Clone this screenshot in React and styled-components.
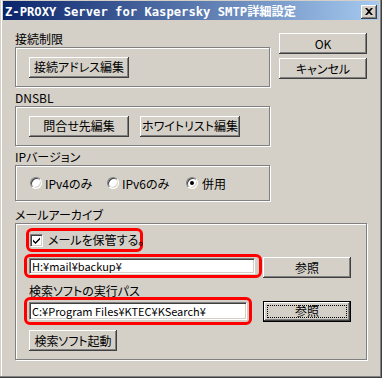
import React from 'react';
import styled, { createGlobalStyle, css } from 'styled-components';

const uiFont = `"Noto Sans CJK JP", "Noto Sans", sans-serif`;

const GlobalStyle = createGlobalStyle`
    html, body {
        margin: 0;
        padding: 0;
        background: #d4d0c8;
    }
    * {
        box-sizing: border-box;
    }
`;

const raised = css`
    box-shadow: inset -1px -1px #404040, inset 1px 1px #ffffff,
        inset -2px -2px #808080, inset 2px 2px #d4d0c8;
`;

const Window = styled.div`
    width: 382px;
    height: 378px;
    padding: 1px 3px 3px 3px;
    background: #d4d0c8;
    display: flex;
    flex-direction: column;
    font-family: ${uiFont};
    font-size: 12px;
    font-feature-settings: 'palt';
    color: #000;
    box-shadow: inset -1px -1px #404040, inset -2px -2px #808080,
        inset 1px 0 #d4d0c8, inset 2px 0 #ffffff;
`;

const TitleBar = styled.div`
    height: 19px;
    flex-shrink: 0;
    display: flex;
    align-items: center;
    justify-content: space-between;
    padding: 0 2px 0 2px;
    background: linear-gradient(to right, #0a246a, #a6caf0);
`;

const TitleText = styled.div`
    font-family: "DejaVu Sans Mono", "Noto Sans CJK JP", monospace;
    font-weight: bold;
    font-size: 12.2px;
    font-feature-settings: normal;
    color: #fff;
    white-space: nowrap;
`;

const CloseButton = styled.div`
    width: 16px;
    height: 14px;
    margin-top: 2px;
    background: #d4d0c8;
    display: flex;
    align-items: center;
    justify-content: center;
    ${raised}
`;

const Body = styled.div`
    flex: 1;
    padding: 9px 12px 0 12px;
    display: flex;
    flex-direction: column;
`;

const TopRow = styled.div`
    display: flex;
    align-items: flex-start;
`;

const LeftColumn = styled.div`
    width: 256px;
    display: flex;
    flex-direction: column;
    gap: 1px;
`;

const SideColumn = styled.div`
    margin-left: 9px;
    padding-top: 4px;
    display: flex;
    flex-direction: column;
    gap: 4px;
`;

const GroupLabel = styled.div`
    height: 18px;
    padding: 3px 0 0 0;
    line-height: 14px;
    white-space: nowrap;
`;

const Frame = styled.div`
    height: ${(p) => p.$height}px;
    border: 1px solid #808080;
    box-shadow: inset 1px 1px #ffffff, 1px 1px #ffffff;
    display: flex;
    align-items: center;
    padding-left: ${(p) => p.$pl || 13}px;
`;

const ButtonRow = styled.div`
    display: flex;
    gap: 11px;
`;

const Button = styled.div`
    position: relative;
    width: ${(p) => p.$w}px;
    height: 21px;
    flex-shrink: 0;
    background: #d4d0c8;
    display: flex;
    align-items: center;
    justify-content: center;
    line-height: 14px;
    white-space: nowrap;
    ${(p) =>
        p.$default
            ? css`
                  box-shadow: inset 0 0 0 1px #000000,
                      inset -2px -2px #404040, inset 2px 2px #ffffff,
                      inset -3px -3px #808080;
                  &::after {
                      content: '';
                      position: absolute;
                      inset: 4px;
                      border: 1px dotted #000;
                  }
              `
            : raised}
`;

const RadioGroup = styled.div`
    display: grid;
    grid-template-columns: 77px 79px auto;
    align-items: center;
`;

const RadioItem = styled.label`
    display: flex;
    align-items: center;
    gap: ${(p) => p.$gap || 3}px;
    white-space: nowrap;
`;

const RadioDot = styled.span`
    position: relative;
    width: 12px;
    height: 12px;
    border-radius: 50%;
    background: #fff;
    border: 1px solid;
    border-color: #808080 #ffffff #ffffff #808080;
    box-shadow: inset 1px 1px #404040, inset -1px -1px #d4d0c8;
    ${(p) =>
        p.$checked &&
        css`
            &::after {
                content: '';
                position: absolute;
                left: 3px;
                top: 3px;
                width: 4px;
                height: 4px;
                border-radius: 50%;
                background: #000;
            }
        `}
`;

const ArchiveLabel = styled(GroupLabel)`
    margin-top: 4px;
`;

const ArchiveFrame = styled.div`
    height: 137px;
    border: 1px solid #808080;
    box-shadow: inset 1px 1px #ffffff, 1px 1px #ffffff;
    padding: 4px 0 0 8px;
    display: flex;
    flex-direction: column;
    align-items: flex-start;
`;

const Ring = styled.div`
    width: ${(p) => p.$w}px;
    border: 3px solid #ff0000;
    border-radius: 6px;
    padding: ${(p) => p.$pad};
    margin-left: ${(p) => p.$ml || 0}px;
    display: flex;
    align-items: center;
`;

const CheckBox = styled.span`
    width: 13px;
    height: 13px;
    flex-shrink: 0;
    background: #fff;
    border: 1px solid;
    border-color: #808080 #ffffff #ffffff #808080;
    box-shadow: inset 1px 1px #404040, inset -1px -1px #d4d0c8;
    display: flex;
    align-items: center;
    justify-content: center;
`;

const CheckText = styled.span`
    margin-left: 5px;
    line-height: 14px;
    white-space: nowrap;
`;

const TextField = styled.div`
    width: ${(p) => p.$w}px;
    height: ${(p) => p.$h || 17}px;
    background: #fff;
    border: 1px solid;
    border-color: #808080 #ffffff #ffffff #808080;
    box-shadow: inset 1px 1px #404040, inset -1px -1px #d4d0c8;
    padding-left: 2px;
    display: flex;
    align-items: center;
    font-size: 11px;
    line-height: 13px;
    white-space: nowrap;
    overflow: hidden;
`;

const FieldRow = styled.div`
    display: grid;
    grid-template-columns: 239px 88px;
    align-items: ${(p) => p.$align || 'end'};
    margin-top: ${(p) => p.$mt || 0}px;
`;

const SubLabel = styled.div`
    margin: 6px 0 0 5px;
    line-height: 13px;
    white-space: nowrap;
`;

const LaunchRow = styled.div`
    margin: 5px 0 0 5px;
`;

const CloseGlyph = () => (
    <svg width="8" height="7" viewBox="0 0 8 7">
        <path d="M0 0h2l2 2 2-2h2L5 3.5 8 7H6L4 5 2 7H0l3-3.5z" fill="#000" />
    </svg>
);

const CheckMark = () => (
    <svg width="9" height="9" viewBox="0 0 9 9">
        <path d="M1 3.5v2l2.5 2.5L8 3.5v-2L3.5 6z" fill="#000" />
    </svg>
);

const App = () => (
    <>
        <GlobalStyle />
        <Window>
            <TitleBar>
                <TitleText>Z-PROXY Server for Kaspersky SMTP詳細設定</TitleText>
                <CloseButton>
                    <CloseGlyph />
                </CloseButton>
            </TitleBar>
            <Body>
                <TopRow>
                    <LeftColumn>
                        <div>
                            <GroupLabel>接続制限</GroupLabel>
                            <Frame $height={40}>
                                <Button $w={100}>接続アドレス編集</Button>
                            </Frame>
                        </div>
                        <div>
                            <GroupLabel>DNSBL</GroupLabel>
                            <Frame $height={40}>
                                <ButtonRow>
                                    <Button $w={100}>問合せ先編集</Button>
                                    <Button $w={100}>ホワイトリスト編集</Button>
                                </ButtonRow>
                            </Frame>
                        </div>
                        <div>
                            <GroupLabel>IPバージョン</GroupLabel>
                            <Frame $height={36} $pl={14}>
                                <RadioGroup>
                                    <RadioItem>
                                        <RadioDot />
                                        IPv4のみ
                                    </RadioItem>
                                    <RadioItem>
                                        <RadioDot />
                                        IPv6のみ
                                    </RadioItem>
                                    <RadioItem $gap={4}>
                                        <RadioDot $checked />
                                        併用
                                    </RadioItem>
                                </RadioGroup>
                            </Frame>
                        </div>
                    </LeftColumn>
                    <SideColumn>
                        <Button $w={88}>OK</Button>
                        <Button $w={88}>キャンセル</Button>
                    </SideColumn>
                </TopRow>
                <ArchiveLabel>メールアーカイブ</ArchiveLabel>
                <ArchiveFrame>
                    <Ring $w={117} $ml={2} $pad="2px 0 2px 1px">
                        <CheckBox>
                            <CheckMark />
                        </CheckBox>
                        <CheckText>メールを保管する。</CheckText>
                    </Ring>
                    <FieldRow $mt={2}>
                        <Ring $w={238} $pad="1px 2px 1px 2px">
                            <TextField $w={226} $h={16}>
                                H:¥mail¥backup¥
                            </TextField>
                        </Ring>
                        <Button $w={88}>参照</Button>
                    </FieldRow>
                    <SubLabel>検索ソフトの実行パス</SubLabel>
                    <FieldRow $align="center">
                        <Ring $w={228} $pad="2px 2px 2px 2px">
                            <TextField $w={218} $h={18}>
                                C:¥Program Files¥KTEC¥KSearch¥
                            </TextField>
                        </Ring>
                        <Button $w={88} $default>
                            参照
                        </Button>
                    </FieldRow>
                    <LaunchRow>
                        <Button $w={88}>検索ソフト起動</Button>
                    </LaunchRow>
                </ArchiveFrame>
            </Body>
        </Window>
    </>
);

export default App;
